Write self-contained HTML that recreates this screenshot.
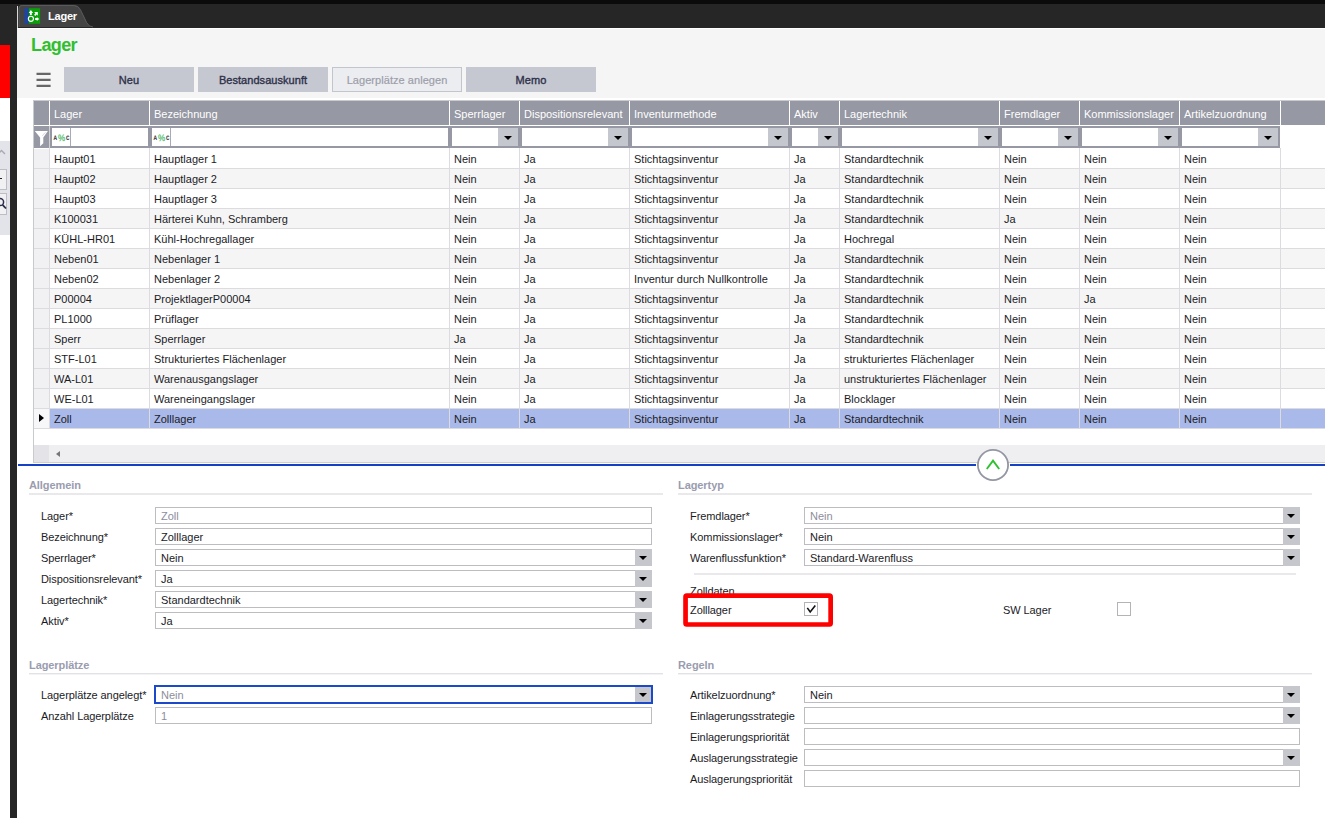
<!DOCTYPE html>
<html lang="de"><head><meta charset="utf-8"><title>Lager</title>
<style>
*{box-sizing:border-box;margin:0;padding:0}
html,body{width:1325px;height:818px;overflow:hidden;background:#fff}
body{position:relative;font-family:"Liberation Sans",sans-serif;font-size:11px;color:#1b1b1f}
i,em,b{font-style:normal;font-weight:normal}
.abs{position:absolute}
.topblack{position:absolute;left:0;top:0;width:1325px;height:4px;background:#0b0b0b}
.darkbar{position:absolute;left:0;top:4px;width:1325px;height:24px;background:#262626}
.lstrip{position:absolute;left:0;top:28px;width:10px;height:790px;background:#fff}
.lstrip .d{position:absolute;left:0;top:0;width:10px;height:17px;background:#262626}
.lstrip .r{position:absolute;left:0;top:17px;width:10px;height:53px;background:#fe0000}
.lstrip .g{position:absolute;left:0;top:113px;width:10px;height:94px;background:#e3e4ea}
.lstrip .b1{position:absolute;left:-6px;top:141px;width:13px;height:21px;background:#f1f1f3;border:1px solid #bdbdc2}
.lstrip .b2{position:absolute;left:-6px;top:165px;width:13px;height:22px;background:#f1f1f3;border:1px solid #bdbdc2}
.vdark{position:absolute;left:10px;top:4px;width:7px;height:814px;background:#262626}
.vline{position:absolute;left:17px;top:6px;width:1px;height:22px;background:#d8d8d8}
.content{position:absolute;left:17px;top:28px;width:1308px;height:70px;background:#f5f5f5}
.tab{position:absolute;left:18px;top:4px}
.tabicon{position:absolute;left:24px;top:8px}
.tabtxt{position:absolute;left:48px;top:9px;color:#fff;font-size:11px;font-weight:bold;letter-spacing:-0.2px;line-height:14px}
.title{position:absolute;left:31px;top:34px;font-size:18px;font-weight:bold;color:#2fbf2f;letter-spacing:-0.6px;line-height:22px}
.burger{position:absolute;left:36.5px;top:73px;width:14px;height:15px}
.burger i{position:absolute;left:0;width:14px;height:2px;background:#606060;box-shadow:0 0 0 0.5px rgba(96,96,96,.25)}
.btn{position:absolute;top:67px;width:130px;height:25px;background:#c5c7d1;color:#2d3048;font-weight:normal;-webkit-text-stroke:0.35px #2d3048;font-size:11px;text-align:center;line-height:27px;letter-spacing:0.05px}
.btn.dis{background:#ecedf0;border:1px solid #c3c5ce;color:#9c9eab;line-height:25px;-webkit-text-stroke:0.2px #9c9eab;letter-spacing:0.05px}
/* grid */
.grid{position:absolute;left:33px;top:100px;width:1292px;height:363px;border-left:1px solid #c9cacf;border-top:1px solid #c9cacf;border-bottom:1px solid #cfcfd3}
.ghead{position:absolute;left:0;top:0;width:1291px;height:24px;background:#9698a3}
.hc{position:absolute;top:0;height:24px;color:#fff;line-height:27px;padding-left:4px;white-space:nowrap;overflow:hidden}
.hs{position:absolute;top:0;width:1px;height:24px;background:#fff}
.gfilt{position:absolute;left:0;top:25px;width:1246px;height:22px;background:#9698a3}
.funnel{position:absolute;left:0;top:4px}
.fc{position:absolute;top:0;height:22px;border-left:0}
.fin{position:absolute;left:2px;top:2px;right:2px;height:18px;background:#fff}
.fc{border-left:0}
.abc{position:absolute;left:0;top:0}
.fsep{position:absolute;left:18px;top:0;width:1px;height:18px;background:#a9abb4}
.dd{position:absolute;right:0;top:0;width:20px;height:18px;background:#c5c7cf}
.dd i{position:absolute;left:6px;top:8px;width:0;height:0;border-left:4px solid transparent;border-right:4px solid transparent;border-top:4px solid #000}
.gbody{position:absolute;left:0;top:47px;width:1291px;height:297px;background:#fff}
.row{position:absolute;left:0;width:1291px;height:20px;border-bottom:1px solid #dcdce0;background:#fff}
.row.alt{background:#f5f5f6}
.row.sel{background:#a9b9ea}
.ind{position:absolute;left:0;top:0;width:15px;height:19px;background:#f1f1f4;border-right:0}
.row.sel .ind{background:#f7f7f9}
.tri{position:absolute;left:5px;top:5px;width:0;height:0;border-top:4.5px solid transparent;border-bottom:4.5px solid transparent;border-left:5px solid #000}
.c{position:absolute;top:0;height:19px;line-height:20px;padding-left:4px;white-space:nowrap;overflow:hidden;color:#1b1b1f}
.vs{position:absolute;top:0;width:1px;height:280px;background:#dcdce0}
.hscroll{position:absolute;left:0;top:344px;width:1291px;height:17px;background:#efeff2}
.hsind{position:absolute;left:0;top:0;width:15px;height:17px;background:#e3e3e8}
.larr{position:absolute;left:22px;top:5.5px;width:0;height:0;border-top:3.2px solid transparent;border-bottom:3.2px solid transparent;border-right:4px solid #75757c}
/* splitter */
.blue{position:absolute;top:464px;height:2px;background:#1741c4}
.circ{display:none}
.chev{position:absolute;left:977px;top:449px}
/* form */
.sec{position:absolute;font-weight:bold;color:#9a9caf;font-size:11px;line-height:14px;letter-spacing:-0.08px}
.ul{position:absolute;height:2px;background:#e9e9eb}
.lab{position:absolute;line-height:14px;white-space:nowrap;color:#1b1b1f;letter-spacing:-0.08px}
.inp{position:absolute;height:17px;border:1px solid #bdbdc1;background:#fff;line-height:17px;padding-left:5px;white-space:nowrap;color:#1b1b1f}
.inp.ro{color:#8c8e9c}
.inp.foc{border:2px solid #1b49c9;line-height:17px;padding-left:5px}
.inp .db{position:absolute;right:-1px;top:-1px;bottom:-1px;width:17px;background:#c6c7cc}
.inp .db i{position:absolute;left:4px;top:7px;width:0;height:0;border-left:4px solid transparent;border-right:4px solid transparent;border-top:4px solid #000}
.cb{position:absolute;width:14px;height:14px;border:1px solid #b4b4b8;background:#fff}
.red{position:absolute;left:680px;top:590px}
.fls{position:absolute;left:15px;top:0;width:1px;height:22px;background:#d2d2d4}
.ul.lo{background:linear-gradient(#e1e2e5 0,#e1e2e5 50%,#f3f3f5 50%,#f3f3f5 100%)}
.inp.foc .db{right:0;top:0;bottom:0;width:16px}
.inp.foc .db i{top:6px}
.wline{position:absolute;left:17px;top:28px;width:1308px;height:1px;background:#fff}

</style></head><body>
<div class="topblack"></div>
<div class="darkbar"></div>
<div class="lstrip"><div class="d"></div><div class="r"></div><div class="g"></div><div class="b1"></div><div class="b2"></div>
<svg class="abs" style="left:0;top:113px" width="10" height="94" viewBox="0 0 10 94"><path d="M-2 13 L1.5 9.5 L5 13" stroke="#a8a9b2" stroke-width="1.4" fill="none"/><path d="M0 37.5 H2" stroke="#222" stroke-width="1"/><circle cx="0" cy="61" r="3.6" stroke="#2b2e48" stroke-width="1.5" fill="none"/><path d="M2.6 63.8 L6 67.5" stroke="#2b2e48" stroke-width="1.8"/></svg>
</div>
<div class="vdark"></div>
<div class="content"></div><div class="wline"></div>
<div class="vline"></div>
<svg class="tab" width="80" height="24" viewBox="0 0 80 24"><path d="M0.6 23 V4.5 Q0.6 1 4 1 H56 Q60.5 1 63 6 L69 18.4 Q71.3 23 75.5 23 Z" fill="#444"/><path d="M1.1 23 V4.6 Q1.1 1.5 4 1.5 H56 Q60.2 1.5 62.6 6.2 L68.6 18.6 Q71 23 75 23" stroke="#5a5a5a" stroke-width="1" fill="none"/></svg>
<svg class="tabicon" width="17" height="16" viewBox="0 0 17 16"><rect x="0.4" y="0.2" width="4.5" height="15.6" fill="#1f43a3"/><rect x="4.8" y="0.2" width="11.3" height="15.6" fill="#0aa00a"/><circle cx="6.9" cy="10.8" r="2.55" stroke="#fff" stroke-width="1.15" fill="none"/><path d="M6.9 2 L9.1 4.9 H7.8 V6.9 H6 V4.9 H4.7 Z" fill="#fff"/><path d="M10.2 4.1 H13.8 V7.7 L12.7 6.6 L11.2 7.9 L10.1 6.8 L11.4 5.4 Z" fill="#fff"/><path d="M11.1 10.1 H12.8 V8.9 L15.2 11 L12.8 13.1 V11.9 H11.1 Z" fill="#fff"/></svg>
<div class="tabtxt">Lager</div>
<div class="title">Lager</div>
<svg class="abs" style="left:34px;top:70px" width="20" height="20" viewBox="0 0 20 20"><path d="M2.5 3.8 H16.6 M2.5 9.8 H16.6 M2.5 15.8 H16.6" stroke="#666" stroke-width="2.3" fill="none"/></svg>
<div class="btn" style="left:64px">Neu</div>
<div class="btn" style="left:198px">Bestandsauskunft</div>
<div class="btn dis" style="left:332px">Lagerplätze anlegen</div>
<div class="btn" style="left:466px">Memo</div>
<div class="grid">
<div class="ghead">
<div class="hc" style="left:16px;width:99px"><span>Lager</span></div>
<div class="hc" style="left:116px;width:299px"><span>Bezeichnung</span></div>
<div class="hc" style="left:416px;width:69px"><span>Sperrlager</span></div>
<div class="hc" style="left:486px;width:109px"><span>Dispositionsrelevant</span></div>
<div class="hc" style="left:596px;width:159px"><span>Inventurmethode</span></div>
<div class="hc" style="left:756px;width:49px"><span>Aktiv</span></div>
<div class="hc" style="left:806px;width:159px"><span>Lagertechnik</span></div>
<div class="hc" style="left:966px;width:79px"><span>Fremdlager</span></div>
<div class="hc" style="left:1046px;width:99px"><span>Kommissionslager</span></div>
<div class="hc" style="left:1146px;width:99px"><span>Artikelzuordnung</span></div>
<i class="hs" style="left:15px"></i>
<i class="hs" style="left:115px"></i>
<i class="hs" style="left:415px"></i>
<i class="hs" style="left:485px"></i>
<i class="hs" style="left:595px"></i>
<i class="hs" style="left:755px"></i>
<i class="hs" style="left:805px"></i>
<i class="hs" style="left:965px"></i>
<i class="hs" style="left:1045px"></i>
<i class="hs" style="left:1145px"></i>
<i class="hs" style="left:1246px"></i>
</div>
<div class="gfilt">
<svg class="funnel" width="15" height="17" viewBox="0 0 15 17"><path d="M0.8 1 H13.9 L9.3 7.6 V13.2 L6.1 16.2 V7.6 Z" fill="#fff"/><path d="M8.6 5.4 L11.2 2.6" stroke="#9698a4" stroke-width="0.7" stroke-dasharray="1 0.6" fill="none"/></svg><i class="fls"></i>
<div class="fc" style="left:16px;width:100px"><div class="fin"><svg class="abc" width="18" height="18" viewBox="0 0 18 18" text-rendering="geometricPrecision"><text x="1.6" y="12" font-family="Liberation Mono, monospace" font-size="6.8" font-weight="bold" fill="#3a3a3a" textLength="3.5" lengthAdjust="spacingAndGlyphs">A</text><text x="5.9" y="12.9" font-family="Liberation Sans, sans-serif" font-size="9.4" fill="#4dbb68" stroke="#4dbb68" stroke-width="0.25" textLength="7.2" lengthAdjust="spacingAndGlyphs">%</text><text x="13.9" y="12" font-family="Liberation Mono, monospace" font-size="6.8" font-weight="bold" fill="#3a3a3a" textLength="3.5" lengthAdjust="spacingAndGlyphs">C</text></svg><i class="fsep"></i></div></div>
<div class="fc" style="left:116px;width:300px"><div class="fin"><svg class="abc" width="18" height="18" viewBox="0 0 18 18" text-rendering="geometricPrecision"><text x="1.6" y="12" font-family="Liberation Mono, monospace" font-size="6.8" font-weight="bold" fill="#3a3a3a" textLength="3.5" lengthAdjust="spacingAndGlyphs">A</text><text x="5.9" y="12.9" font-family="Liberation Sans, sans-serif" font-size="9.4" fill="#4dbb68" stroke="#4dbb68" stroke-width="0.25" textLength="7.2" lengthAdjust="spacingAndGlyphs">%</text><text x="13.9" y="12" font-family="Liberation Mono, monospace" font-size="6.8" font-weight="bold" fill="#3a3a3a" textLength="3.5" lengthAdjust="spacingAndGlyphs">C</text></svg><i class="fsep"></i></div></div>
<div class="fc" style="left:416px;width:70px"><div class="fin"><span class="dd"><i></i></span></div></div>
<div class="fc" style="left:486px;width:110px"><div class="fin"><span class="dd"><i></i></span></div></div>
<div class="fc" style="left:596px;width:160px"><div class="fin"><span class="dd"><i></i></span></div></div>
<div class="fc" style="left:756px;width:50px"><div class="fin"><span class="dd"><i></i></span></div></div>
<div class="fc" style="left:806px;width:160px"><div class="fin"><span class="dd"><i></i></span></div></div>
<div class="fc" style="left:966px;width:80px"><div class="fin"><span class="dd"><i></i></span></div></div>
<div class="fc" style="left:1046px;width:100px"><div class="fin"><span class="dd"><i></i></span></div></div>
<div class="fc" style="left:1146px;width:100px"><div class="fin"><span class="dd"><i></i></span></div></div>
</div>
<div class="gbody">
<div class="row" style="top:1px">
<div class="ind"></div>
<div class="c" style="left:16px;width:99px">Haupt01</div>
<div class="c" style="left:116px;width:299px">Hauptlager 1</div>
<div class="c" style="left:416px;width:69px">Nein</div>
<div class="c" style="left:486px;width:109px">Ja</div>
<div class="c" style="left:596px;width:159px">Stichtagsinventur</div>
<div class="c" style="left:756px;width:49px">Ja</div>
<div class="c" style="left:806px;width:159px">Standardtechnik</div>
<div class="c" style="left:966px;width:79px">Nein</div>
<div class="c" style="left:1046px;width:99px">Nein</div>
<div class="c" style="left:1146px;width:99px">Nein</div>
</div>
<div class="row alt" style="top:21px">
<div class="ind"></div>
<div class="c" style="left:16px;width:99px">Haupt02</div>
<div class="c" style="left:116px;width:299px">Hauptlager 2</div>
<div class="c" style="left:416px;width:69px">Nein</div>
<div class="c" style="left:486px;width:109px">Ja</div>
<div class="c" style="left:596px;width:159px">Stichtagsinventur</div>
<div class="c" style="left:756px;width:49px">Ja</div>
<div class="c" style="left:806px;width:159px">Standardtechnik</div>
<div class="c" style="left:966px;width:79px">Nein</div>
<div class="c" style="left:1046px;width:99px">Nein</div>
<div class="c" style="left:1146px;width:99px">Nein</div>
</div>
<div class="row" style="top:41px">
<div class="ind"></div>
<div class="c" style="left:16px;width:99px">Haupt03</div>
<div class="c" style="left:116px;width:299px">Hauptlager 3</div>
<div class="c" style="left:416px;width:69px">Nein</div>
<div class="c" style="left:486px;width:109px">Ja</div>
<div class="c" style="left:596px;width:159px">Stichtagsinventur</div>
<div class="c" style="left:756px;width:49px">Ja</div>
<div class="c" style="left:806px;width:159px">Standardtechnik</div>
<div class="c" style="left:966px;width:79px">Nein</div>
<div class="c" style="left:1046px;width:99px">Nein</div>
<div class="c" style="left:1146px;width:99px">Nein</div>
</div>
<div class="row alt" style="top:61px">
<div class="ind"></div>
<div class="c" style="left:16px;width:99px">K100031</div>
<div class="c" style="left:116px;width:299px">Härterei Kuhn, Schramberg</div>
<div class="c" style="left:416px;width:69px">Nein</div>
<div class="c" style="left:486px;width:109px">Ja</div>
<div class="c" style="left:596px;width:159px">Stichtagsinventur</div>
<div class="c" style="left:756px;width:49px">Ja</div>
<div class="c" style="left:806px;width:159px">Standardtechnik</div>
<div class="c" style="left:966px;width:79px">Ja</div>
<div class="c" style="left:1046px;width:99px">Nein</div>
<div class="c" style="left:1146px;width:99px">Nein</div>
</div>
<div class="row" style="top:81px">
<div class="ind"></div>
<div class="c" style="left:16px;width:99px">KÜHL-HR01</div>
<div class="c" style="left:116px;width:299px">Kühl-Hochregallager</div>
<div class="c" style="left:416px;width:69px">Nein</div>
<div class="c" style="left:486px;width:109px">Ja</div>
<div class="c" style="left:596px;width:159px">Stichtagsinventur</div>
<div class="c" style="left:756px;width:49px">Ja</div>
<div class="c" style="left:806px;width:159px">Hochregal</div>
<div class="c" style="left:966px;width:79px">Nein</div>
<div class="c" style="left:1046px;width:99px">Nein</div>
<div class="c" style="left:1146px;width:99px">Nein</div>
</div>
<div class="row alt" style="top:101px">
<div class="ind"></div>
<div class="c" style="left:16px;width:99px">Neben01</div>
<div class="c" style="left:116px;width:299px">Nebenlager 1</div>
<div class="c" style="left:416px;width:69px">Nein</div>
<div class="c" style="left:486px;width:109px">Ja</div>
<div class="c" style="left:596px;width:159px">Stichtagsinventur</div>
<div class="c" style="left:756px;width:49px">Ja</div>
<div class="c" style="left:806px;width:159px">Standardtechnik</div>
<div class="c" style="left:966px;width:79px">Nein</div>
<div class="c" style="left:1046px;width:99px">Nein</div>
<div class="c" style="left:1146px;width:99px">Nein</div>
</div>
<div class="row" style="top:121px">
<div class="ind"></div>
<div class="c" style="left:16px;width:99px">Neben02</div>
<div class="c" style="left:116px;width:299px">Nebenlager 2</div>
<div class="c" style="left:416px;width:69px">Nein</div>
<div class="c" style="left:486px;width:109px">Ja</div>
<div class="c" style="left:596px;width:159px">Inventur durch Nullkontrolle</div>
<div class="c" style="left:756px;width:49px">Ja</div>
<div class="c" style="left:806px;width:159px">Standardtechnik</div>
<div class="c" style="left:966px;width:79px">Nein</div>
<div class="c" style="left:1046px;width:99px">Nein</div>
<div class="c" style="left:1146px;width:99px">Nein</div>
</div>
<div class="row alt" style="top:141px">
<div class="ind"></div>
<div class="c" style="left:16px;width:99px">P00004</div>
<div class="c" style="left:116px;width:299px">ProjektlagerP00004</div>
<div class="c" style="left:416px;width:69px">Nein</div>
<div class="c" style="left:486px;width:109px">Ja</div>
<div class="c" style="left:596px;width:159px">Stichtagsinventur</div>
<div class="c" style="left:756px;width:49px">Ja</div>
<div class="c" style="left:806px;width:159px">Standardtechnik</div>
<div class="c" style="left:966px;width:79px">Nein</div>
<div class="c" style="left:1046px;width:99px">Ja</div>
<div class="c" style="left:1146px;width:99px">Nein</div>
</div>
<div class="row" style="top:161px">
<div class="ind"></div>
<div class="c" style="left:16px;width:99px">PL1000</div>
<div class="c" style="left:116px;width:299px">Prüflager</div>
<div class="c" style="left:416px;width:69px">Nein</div>
<div class="c" style="left:486px;width:109px">Ja</div>
<div class="c" style="left:596px;width:159px">Stichtagsinventur</div>
<div class="c" style="left:756px;width:49px">Ja</div>
<div class="c" style="left:806px;width:159px">Standardtechnik</div>
<div class="c" style="left:966px;width:79px">Nein</div>
<div class="c" style="left:1046px;width:99px">Nein</div>
<div class="c" style="left:1146px;width:99px">Nein</div>
</div>
<div class="row alt" style="top:181px">
<div class="ind"></div>
<div class="c" style="left:16px;width:99px">Sperr</div>
<div class="c" style="left:116px;width:299px">Sperrlager</div>
<div class="c" style="left:416px;width:69px">Ja</div>
<div class="c" style="left:486px;width:109px">Ja</div>
<div class="c" style="left:596px;width:159px">Stichtagsinventur</div>
<div class="c" style="left:756px;width:49px">Ja</div>
<div class="c" style="left:806px;width:159px">Standardtechnik</div>
<div class="c" style="left:966px;width:79px">Nein</div>
<div class="c" style="left:1046px;width:99px">Nein</div>
<div class="c" style="left:1146px;width:99px">Nein</div>
</div>
<div class="row" style="top:201px">
<div class="ind"></div>
<div class="c" style="left:16px;width:99px">STF-L01</div>
<div class="c" style="left:116px;width:299px">Strukturiertes Flächenlager</div>
<div class="c" style="left:416px;width:69px">Nein</div>
<div class="c" style="left:486px;width:109px">Ja</div>
<div class="c" style="left:596px;width:159px">Stichtagsinventur</div>
<div class="c" style="left:756px;width:49px">Ja</div>
<div class="c" style="left:806px;width:159px">strukturiertes Flächenlager</div>
<div class="c" style="left:966px;width:79px">Nein</div>
<div class="c" style="left:1046px;width:99px">Nein</div>
<div class="c" style="left:1146px;width:99px">Nein</div>
</div>
<div class="row alt" style="top:221px">
<div class="ind"></div>
<div class="c" style="left:16px;width:99px">WA-L01</div>
<div class="c" style="left:116px;width:299px">Warenausgangslager</div>
<div class="c" style="left:416px;width:69px">Nein</div>
<div class="c" style="left:486px;width:109px">Ja</div>
<div class="c" style="left:596px;width:159px">Stichtagsinventur</div>
<div class="c" style="left:756px;width:49px">Ja</div>
<div class="c" style="left:806px;width:159px">unstrukturiertes Flächenlager</div>
<div class="c" style="left:966px;width:79px">Nein</div>
<div class="c" style="left:1046px;width:99px">Nein</div>
<div class="c" style="left:1146px;width:99px">Nein</div>
</div>
<div class="row" style="top:241px">
<div class="ind"></div>
<div class="c" style="left:16px;width:99px">WE-L01</div>
<div class="c" style="left:116px;width:299px">Wareneingangslager</div>
<div class="c" style="left:416px;width:69px">Nein</div>
<div class="c" style="left:486px;width:109px">Ja</div>
<div class="c" style="left:596px;width:159px">Stichtagsinventur</div>
<div class="c" style="left:756px;width:49px">Ja</div>
<div class="c" style="left:806px;width:159px">Blocklager</div>
<div class="c" style="left:966px;width:79px">Nein</div>
<div class="c" style="left:1046px;width:99px">Nein</div>
<div class="c" style="left:1146px;width:99px">Nein</div>
</div>
<div class="row alt sel" style="top:261px">
<div class="ind"><i class="tri"></i></div>
<div class="c" style="left:16px;width:99px">Zoll</div>
<div class="c" style="left:116px;width:299px">Zolllager</div>
<div class="c" style="left:416px;width:69px">Nein</div>
<div class="c" style="left:486px;width:109px">Ja</div>
<div class="c" style="left:596px;width:159px">Stichtagsinventur</div>
<div class="c" style="left:756px;width:49px">Ja</div>
<div class="c" style="left:806px;width:159px">Standardtechnik</div>
<div class="c" style="left:966px;width:79px">Nein</div>
<div class="c" style="left:1046px;width:99px">Nein</div>
<div class="c" style="left:1146px;width:99px">Nein</div>
</div>
<i class="vs" style="left:15px"></i>
<i class="vs" style="left:115px"></i>
<i class="vs" style="left:415px"></i>
<i class="vs" style="left:485px"></i>
<i class="vs" style="left:595px"></i>
<i class="vs" style="left:755px"></i>
<i class="vs" style="left:805px"></i>
<i class="vs" style="left:965px"></i>
<i class="vs" style="left:1045px"></i>
<i class="vs" style="left:1145px"></i>
<i class="vs" style="left:1246px"></i>
</div>
<div class="hscroll"><div class="hsind"></div><i class="larr"></i></div>
</div>
<div class="blue" style="left:18px;width:958px"></div>
<div class="blue" style="left:1010px;width:315px"></div>
<svg class="chev" width="32" height="32" viewBox="0 0 32 32"><circle cx="16" cy="16" r="15.1" fill="#fff" stroke="#9496a2" stroke-width="1.8"/><path d="M9.8 20 L16 11.6 L22.2 20" stroke="#2fc12f" stroke-width="1.9" fill="none"/></svg>

<div class="sec" style="left:29px;top:478px">Allgemein</div>
<div class="ul" style="left:29px;top:493px;width:634px"></div>
<div class="lab" style="left:41px;top:509px">Lager*</div>
<div class="lab" style="left:41px;top:530px">Bezeichnung*</div>
<div class="lab" style="left:41px;top:551px">Sperrlager*</div>
<div class="lab" style="left:41px;top:572px">Dispositionsrelevant*</div>
<div class="lab" style="left:41px;top:593px">Lagertechnik*</div>
<div class="lab" style="left:41px;top:614px">Aktiv*</div>
<div class="inp ro" style="left:155px;top:507px;width:497px">Zoll</div>
<div class="inp" style="left:155px;top:528px;width:497px">Zolllager</div>
<div class="inp" style="left:155px;top:549px;width:497px">Nein<span class="db"><i></i></span></div>
<div class="inp" style="left:155px;top:570px;width:497px">Ja<span class="db"><i></i></span></div>
<div class="inp" style="left:155px;top:591px;width:497px">Standardtechnik<span class="db"><i></i></span></div>
<div class="inp" style="left:155px;top:612px;width:497px">Ja<span class="db"><i></i></span></div>

<div class="sec" style="left:678px;top:478px">Lagertyp</div>
<div class="ul" style="left:678px;top:493px;width:634px"></div>
<div class="lab" style="left:690px;top:509px">Fremdlager*</div>
<div class="lab" style="left:690px;top:530px">Kommissionslager*</div>
<div class="lab" style="left:690px;top:551px">Warenflussfunktion*</div>
<div class="inp ro" style="left:804px;top:507px;width:496px">Nein<span class="db"><i></i></span></div>
<div class="inp" style="left:804px;top:528px;width:496px">Nein<span class="db"><i></i></span></div>
<div class="inp" style="left:804px;top:549px;width:496px">Standard-Warenfluss<span class="db"><i></i></span></div>
<div class="ul" style="left:694px;top:573px;width:602px"></div>
<div class="lab" style="left:690px;top:584px">Zolldaten</div>
<div class="lab" style="left:690px;top:603px">Zolllager</div>
<div class="cb" style="left:804px;top:602px"><svg width="12" height="12" viewBox="0 0 12 12" style="position:absolute;left:0;top:0"><path d="M2.3 4.9 L5.2 9 L10.3 2.6" stroke="#111" stroke-width="1.6" fill="none"/></svg></div>
<svg class="red" width="160" height="40" viewBox="0 0 160 40"><rect x="5.55" y="5.7" width="145.1" height="28.8" rx="1.2" ry="1.2" fill="none" stroke="#fe0000" stroke-width="4.7"/></svg>
<div class="lab" style="left:1003px;top:603px">SW Lager</div>
<div class="cb" style="left:1117px;top:602px"></div>

<div class="sec" style="left:29px;top:658px">Lagerplätze</div>
<div class="ul lo" style="left:29px;top:673px;width:634px"></div>
<div class="lab" style="left:41px;top:688px">Lagerplätze angelegt*</div>
<div class="lab" style="left:41px;top:709px">Anzahl Lagerplätze</div>
<div class="inp ro foc" style="left:154px;top:685px;width:499px;height:19px">Nein<span class="db"><i></i></span></div>
<div class="inp ro" style="left:155px;top:707px;width:497px">1</div>

<div class="sec" style="left:678px;top:658px">Regeln</div>
<div class="ul lo" style="left:678px;top:673px;width:634px"></div>
<div class="lab" style="left:690px;top:688px">Artikelzuordnung*</div>
<div class="lab" style="left:690px;top:709px">Einlagerungsstrategie</div>
<div class="lab" style="left:690px;top:730px">Einlagerungspriorität</div>
<div class="lab" style="left:690px;top:751px">Auslagerungsstrategie</div>
<div class="lab" style="left:690px;top:772px">Auslagerungspriorität</div>
<div class="inp" style="left:804px;top:686px;width:496px">Nein<span class="db"><i></i></span></div>
<div class="inp" style="left:804px;top:707px;width:496px"><span class="db"><i></i></span></div>
<div class="inp" style="left:804px;top:728px;width:496px"></div>
<div class="inp" style="left:804px;top:749px;width:496px"><span class="db"><i></i></span></div>
<div class="inp" style="left:804px;top:770px;width:496px"></div>

</body></html>
